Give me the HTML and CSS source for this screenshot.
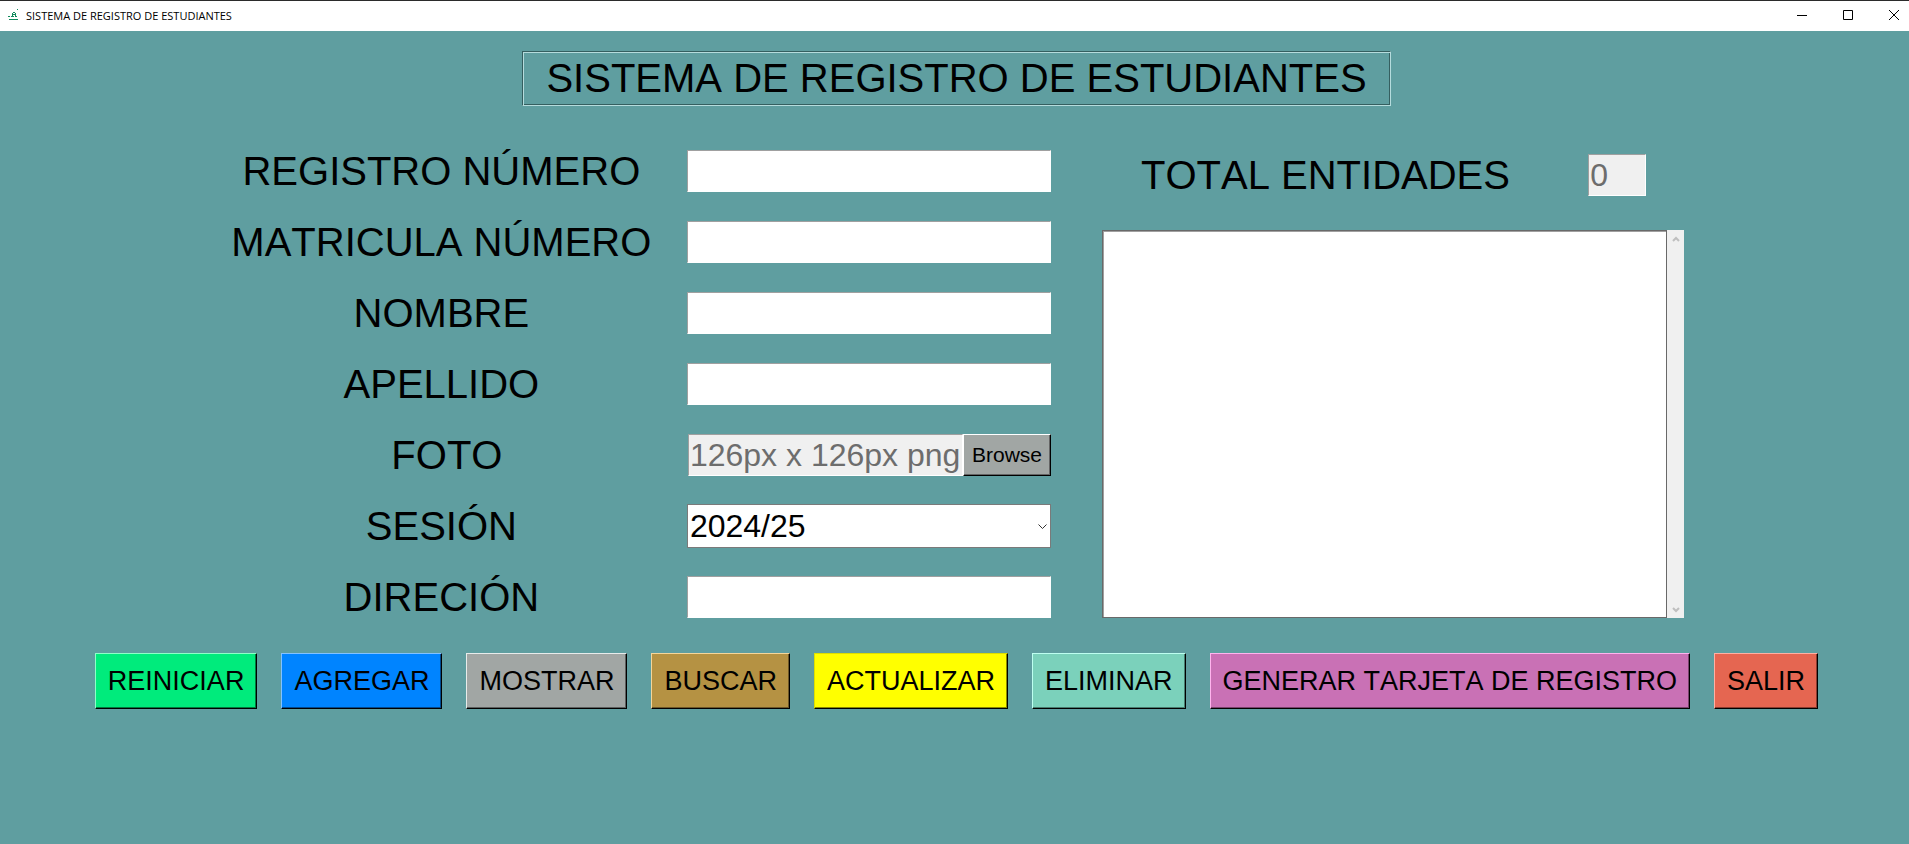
FILE: index.html
```
<!DOCTYPE html>
<html lang="es">
<head>
<meta charset="utf-8">
<title>SISTEMA DE REGISTRO DE ESTUDIANTES</title>
<link rel="stylesheet" href="styles.css">
</head>
<body>
<div class="titlebar">
  <svg class="app-icon" viewBox="0 0 12 12" fill="none" stroke="#128a5c" shape-rendering="crispEdges" aria-hidden="true">
    <path d="M1 10.5h9M0 7.5h2M3 7.5h3M7 7.5h2M4.500 7v-3M7.500 7v-3M5 3.500h2M5 5.500h2M9 .5h1"/>
  </svg>
  <span class="window-title">SISTEMA DE REGISTRO DE ESTUDIANTES</span>
  <div class="window-controls">
    <button class="window-button" type="button" aria-label="Minimizar"><svg viewBox="0 0 10 10"><path d="M0 5.500h10"/></svg></button>
    <button class="window-button" type="button" aria-label="Maximizar"><svg viewBox="0 0 10 10"><path d="M.5.5h9v9h-9z"/></svg></button>
    <button class="window-button" type="button" aria-label="Cerrar"><svg viewBox="0 0 10 10"><path d="M0 0l10 10M10 0L0 10"/></svg></button>
  </div>
</div>
<main class="app">
  <h1 class="heading">SISTEMA DE REGISTRO DE ESTUDIANTES</h1>
  <div class="workspace">
    <form class="fields">
      <label for="registro">REGISTRO NÚMERO</label>
      <input class="entry" id="registro" type="text">
      <label for="matricula">MATRICULA NÚMERO</label>
      <input class="entry" id="matricula" type="text">
      <label for="nombre">NOMBRE</label>
      <input class="entry" id="nombre" type="text">
      <label for="apellido">APELLIDO</label>
      <input class="entry" id="apellido" type="text">
      <label for="foto">&nbsp;FOTO</label>
      <div class="file-field">
        <input class="entry" id="foto" type="text" value="126px x 126px png" disabled>
        <button class="button browse" type="button">Browse</button>
      </div>
      <label for="sesion">SESIÓN</label>
      <div class="select-field">
        <select id="sesion"><option>2024/25</option></select>
        <svg class="chevron" viewBox="0 0 9 5" aria-hidden="true"><path d="M.5.5l4 4 4-4"/></svg>
      </div>
      <label for="direccion">DIRECIÓN</label>
      <input class="entry" id="direccion" type="text">
    </form>
    <section class="results">
      <div class="total">
        <label for="total">TOTAL ENTIDADES</label>
        <input class="entry" id="total" type="text" value="0" disabled>
      </div>
      <div class="listing">
        <textarea aria-label="Registros"></textarea>
        <div class="scrollbar" aria-hidden="true">
          <svg viewBox="0 0 8 6"><path d="M1 5l3-3 3 3"/></svg>
          <svg viewBox="0 0 8 6"><path d="M1 1l3 3 3-3"/></svg>
        </div>
      </div>
    </section>
  </div>
  <div class="actions">
    <button class="button reset" type="button">REINICIAR</button>
    <button class="button add" type="button">AGREGAR</button>
    <button class="button show" type="button">MOSTRAR</button>
    <button class="button search" type="button">BUSCAR</button>
    <button class="button update" type="button">ACTUALIZAR</button>
    <button class="button delete" type="button">ELIMINAR</button>
    <button class="button card" type="button">GENERAR TARJETA DE REGISTRO</button>
    <button class="button exit" type="button">SALIR</button>
  </div>
</main>
</body>
</html>
```
FILE: styles.css
```
* { box-sizing: border-box; }

body {
  margin: 0;
  min-height: 100vh;
  display: flex;
  flex-direction: column;
  background: #5f9ea0;
  color: #000;
  font-family: "Liberation Sans", Arial, sans-serif;
  font-kerning: none;
}

input, select, textarea, button {
  margin: 0;
  border-radius: 0;
  font: inherit;
  font-kerning: none;
  color: inherit;
}

.titlebar {
  display: flex;
  align-items: center;
  height: 31px;
  padding: 0 0 2px 8px;
  border-top: 1px solid #2b2b2b;
  background: #fff;
}

.app-icon { width: 12px; height: 12px; }

.window-title {
  margin-left: 6px;
  font: 11px "Open Sans", "Noto Sans", sans-serif;
}

.window-controls { display: flex; margin-left: auto; }

.window-button {
  display: grid;
  place-items: center;
  width: 46px;
  height: 28px;
  padding: 0;
  border: 0;
  background: none;
}

.window-button:last-child {
  width: 30px;
  margin-left: 8px;
}

.window-button svg {
  width: 10px;
  height: 10px;
  fill: none;
  stroke: #000;
}

.app {
  display: flex;
  flex-direction: column;
  align-items: center;
  padding: 20px 0 20px 4px;
}

.heading {
  margin: 0;
  padding: 4px 23px 5px;
  border: 1px solid;
  border-color: #355f60 #b5dcdd #b5dcdd #355f60;
  box-shadow: inset 1px 1px #b5dcdd, inset -1px -1px #355f60;
  font-size: 40px;
  font-weight: 400;
  line-height: 44px;
}

.workspace {
  display: grid;
  grid-template-columns: minmax(0, 822fr) minmax(0, 582fr);
  column-gap: 51px;
  width: 76.400%;
  margin-top: 44px;
}

.fields {
  display: grid;
  grid-template-columns: minmax(0, 425fr) minmax(0, 364fr);
  grid-auto-rows: 42px;
  gap: 29px 33px;
  align-items: center;
  font-size: 40px;
  line-height: 42px;
  text-align: center;
  white-space: nowrap;
}

.entry {
  width: 100%;
  height: 42px;
  padding: 0 1px;
  border: 1px solid;
  border-color: #a0a0a0 #fff #fff #a0a0a0;
  background: #fff;
  font-size: 32px;
  outline: 0;
}

.entry:disabled { background: #f0f0f0; color: #6d6d6d; }

.file-field { display: flex; padding-left: 1px; }
.file-field .entry { flex: 1; min-width: 0; }

.select-field { position: relative; height: 44px; }

.select-field select {
  display: block;
  width: 100%;
  height: 44px;
  padding: 0 24px 0 2px;
  border: 1px solid #7a7a7a;
  background: #fff;
  font-size: 32px;
  appearance: none;
}

.chevron {
  position: absolute;
  right: 4px;
  top: 20px;
  width: 9px;
  height: 5px;
  fill: none;
  stroke: #333;
  pointer-events: none;
}

.results {
  display: flex;
  flex-direction: column;
  gap: 34px;
  padding-top: 4px;
}

.total {
  display: flex;
  align-items: center;
  justify-content: space-between;
  padding: 0 38px 0 39px;
  font-size: 40px;
  line-height: 42px;
  white-space: nowrap;
}

.total .entry { width: 58px; }

.listing { display: flex; flex: 1; }

.listing textarea {
  flex: 1;
  min-width: 0;
  padding: 2px;
  border: 1px solid #696969;
  box-shadow: inset 1px 1px #a0a0a0;
  background: #fff;
  font-size: 32px;
  resize: none;
  outline: 0;
}

.scrollbar {
  display: flex;
  flex-direction: column;
  justify-content: space-between;
  align-items: center;
  width: 17px;
  padding: 6px 0 5px;
  background: #f0f0f0;
}

.scrollbar svg {
  width: 8px;
  height: 6px;
  fill: none;
  stroke: #bfbfbf;
  stroke-width: 2;
}

.actions {
  display: flex;
  justify-content: center;
  gap: 24px;
  margin-top: 35px;
}

.button {
  --light: #fff;
  --dark: #646464;
  padding: 0 12px;
  border: 1px solid;
  border-color: var(--light) #000 #000 var(--light);
  box-shadow: inset -1px -1px var(--dark);
  font-size: 27px;
  line-height: 54px;
  white-space: nowrap;
}

.browse {
  padding: 0 8px;
  background: #a1a6a4;
  font-size: 21px;
  line-height: 40px;
}

.reset { background: #00eb7c; --light: #8dffc8; --dark: #007a40; }
.add { background: #0084ff; --light: #82c2ff; --dark: #004a90; }
.show { background: #a1a6a4; --light: #e8eceb; --dark: #5c5f5e; }
.search { background: #b59243; --light: #f5d69a; --dark: #6c5728; }
.update { background: #ff0; --light: #dede00; --dark: #8a8a00; }
.delete { background: #7bd1bb; --light: #bdfff0; --dark: #487c6f; }
.card { background: #c971b5; --light: #ffb4ee; --dark: #78436c; }
.exit { background: #e56651; --light: #ffb0a3; --dark: #883c30; }
```
